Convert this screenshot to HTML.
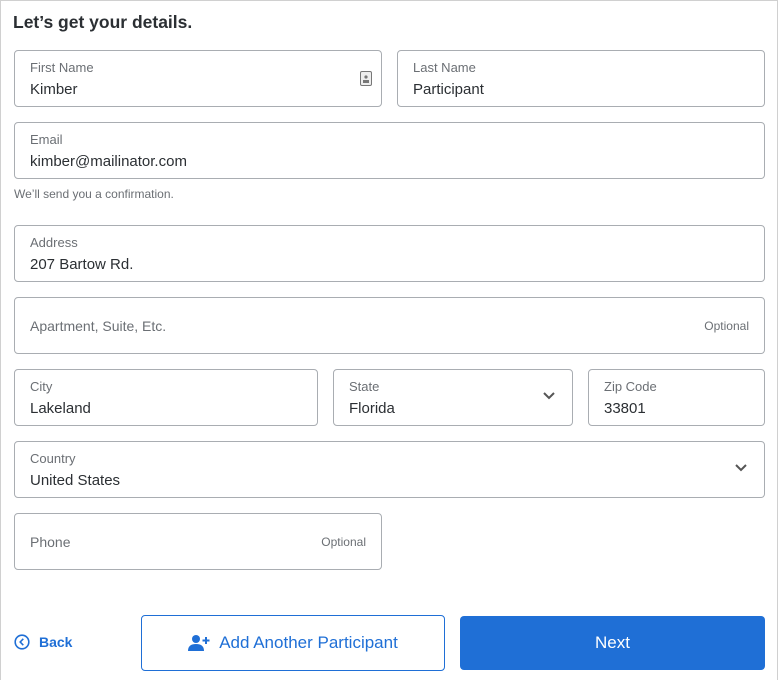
<!DOCTYPE html>
<html><head><style>
*{box-sizing:border-box;margin:0;padding:0}
html,body{width:778px;height:680px;overflow:hidden}
body{background:#fff;font-family:"Liberation Sans",sans-serif;position:relative}
.bd{position:absolute;left:0;top:0;width:778px;height:680px;border:1px solid #d0d0d0;border-bottom:none}
.f{position:absolute;border:1px solid #a9adb2;border-radius:4px;height:57px;background:#fff}
.l{position:absolute;left:15px;top:9px;font-size:13px;color:#6b6f74}
.v{position:absolute;left:15px;top:30px;font-size:15px;color:#2b2f33}
.p{position:absolute;left:15px;top:20px;font-size:14px;color:#6b6f74}
.o{position:absolute;right:15px;top:21px;font-size:12px;color:#6b6f74}
.ch{position:absolute;right:16px;top:21px}
h1{position:absolute;left:13px;top:12px;font-size:17.5px;font-weight:bold;color:#2b2f33}
</style></head><body>
<div class="bd"></div>
<h1>Let’s get your details.</h1>
<div class="f" style="left:14px;top:50px;width:368px"><div class="l">First Name</div><div class="v">Kimber</div>
<svg style="position:absolute;right:9px;top:20px" width="12" height="15" viewBox="0 0 12 15"><rect x="0.5" y="0.5" width="11" height="14" rx="1.5" fill="#eee" stroke="#777"/><circle cx="6" cy="6" r="1.6" fill="#777"/><rect x="3" y="9" width="6" height="3" fill="#777"/></svg></div>
<div class="f" style="left:397px;top:50px;width:368px"><div class="l">Last Name</div><div class="v">Participant</div></div>
<div class="f" style="left:14px;top:122px;width:751px"><div class="l">Email</div><div class="v">kimber@mailinator.com</div></div>
<div style="position:absolute;left:14px;top:187px;font-size:12px;color:#6b6f74">We’ll send you a confirmation.</div>
<div class="f" style="left:14px;top:225px;width:751px"><div class="l">Address</div><div class="v">207 Bartow Rd.</div></div>
<div class="f" style="left:14px;top:297px;width:751px"><div class="p">Apartment, Suite, Etc.</div><div class="o">Optional</div></div>
<div class="f" style="left:14px;top:369px;width:304px"><div class="l">City</div><div class="v">Lakeland</div></div>
<div class="f" style="left:333px;top:369px;width:240px"><div class="l">State</div><div class="v">Florida</div>
<svg class="ch" width="14" height="9" viewBox="0 0 14 9"><path d="M2 2l5 5 5-5" fill="none" stroke="#555" stroke-width="2"/></svg></div>
<div class="f" style="left:588px;top:369px;width:177px"><div class="l">Zip Code</div><div class="v">33801</div></div>
<div class="f" style="left:14px;top:441px;width:751px"><div class="l">Country</div><div class="v">United States</div>
<svg class="ch" width="14" height="9" viewBox="0 0 14 9"><path d="M2 2l5 5 5-5" fill="none" stroke="#555" stroke-width="2"/></svg></div>
<div class="f" style="left:14px;top:513px;width:368px"><div class="p">Phone</div><div class="o">Optional</div></div>
<div style="position:absolute;left:14px;top:634px;color:#1f6fd6;font-weight:bold;font-size:14px;display:flex;align-items:center">
<svg width="16" height="16" viewBox="0 0 16 16"><circle cx="8" cy="8" r="6.8" fill="none" stroke="#1f6fd6" stroke-width="1.6"/><path d="M9.3 4.8L6.2 8l3.1 3.2" fill="none" stroke="#1f6fd6" stroke-width="1.6"/></svg><span style="margin-left:9px">Back</span></div>
<div style="position:absolute;left:141px;top:615px;width:304px;height:56px;border:1px solid #1f6fd6;border-radius:4px;display:flex;align-items:center;justify-content:center;color:#1f6fd6;font-size:17px">
<svg width="22" height="18" viewBox="0 0 22 18" style="margin-right:9px"><circle cx="8" cy="5" r="4" fill="#1f6fd6"/><path d="M0 17c0-5 3-7 8-7s8 2 8 7z" fill="#1f6fd6"/><path d="M18 3v7M14.5 6.5h7" stroke="#1f6fd6" stroke-width="2"/></svg>Add Another Participant</div>
<div style="position:absolute;left:460px;top:616px;width:305px;height:54px;background:#1f6fd6;border-radius:4px;display:flex;align-items:center;justify-content:center;color:#fff;font-size:17px">Next</div>
</body></html>
